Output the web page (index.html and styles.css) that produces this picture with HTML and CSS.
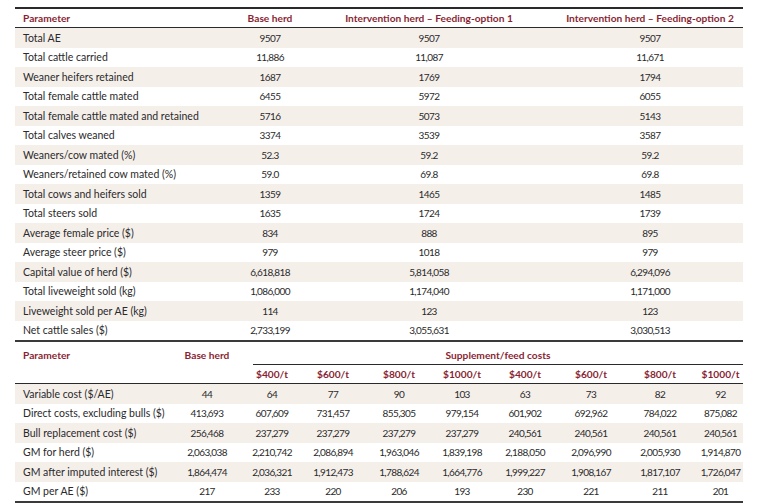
FILE: index.html
```html
<!DOCTYPE html>
<html>
<head>
<meta charset="utf-8">
<link rel="stylesheet" href="styles.css">
</head>
<body>
<div class="page">
<table class="t1">
  <colgroup><col class="c-param"><col class="c-base"><col class="c-opt1"><col class="c-opt2"></colgroup>
  <thead>
    <tr class="head"><th class="param">Parameter</th><th>Base herd</th><th>Intervention herd – Feeding-option 1</th><th class="opt2">Intervention herd – Feeding-option 2</th></tr>
  </thead>
  <tbody>
    <tr><td class="param">Total AE</td><td>9507</td><td>9507</td><td class="opt2">9507</td></tr>
    <tr><td class="param">Total cattle carried</td><td>11,886</td><td>11,087</td><td class="opt2">11,671</td></tr>
    <tr><td class="param">Weaner heifers retained</td><td>1687</td><td>1769</td><td class="opt2">1794</td></tr>
    <tr><td class="param">Total female cattle mated</td><td>6455</td><td>5972</td><td class="opt2">6055</td></tr>
    <tr><td class="param">Total female cattle mated and retained</td><td>5716</td><td>5073</td><td class="opt2">5143</td></tr>
    <tr><td class="param">Total calves weaned</td><td>3374</td><td>3539</td><td class="opt2">3587</td></tr>
    <tr><td class="param">Weaners/cow mated (%)</td><td>52.3</td><td>59.2</td><td class="opt2">59.2</td></tr>
    <tr><td class="param">Weaners/retained cow mated (%)</td><td>59.0</td><td>69.8</td><td class="opt2">69.8</td></tr>
    <tr><td class="param">Total cows and heifers sold</td><td>1359</td><td>1465</td><td class="opt2">1485</td></tr>
    <tr><td class="param">Total steers sold</td><td>1635</td><td>1724</td><td class="opt2">1739</td></tr>
    <tr><td class="param">Average female price ($)</td><td>834</td><td>888</td><td class="opt2">895</td></tr>
    <tr><td class="param">Average steer price ($)</td><td>979</td><td>1018</td><td class="opt2">979</td></tr>
    <tr><td class="param">Capital value of herd ($)</td><td>6,618,818</td><td>5,814,058</td><td class="opt2">6,294,096</td></tr>
    <tr><td class="param">Total liveweight sold (kg)</td><td>1,086,000</td><td>1,174,040</td><td class="opt2">1,171,000</td></tr>
    <tr><td class="param">Liveweight sold per AE (kg)</td><td>114</td><td>123</td><td class="opt2">123</td></tr>
    <tr class="last"><td class="param">Net cattle sales ($)</td><td>2,733,199</td><td>3,055,631</td><td class="opt2">3,030,513</td></tr>
  </tbody>
</table>
<table class="t2">
  <colgroup><col class="d-param"><col class="d-base"><col class="d1"><col class="d2"><col class="d3"><col class="d4"><col class="d5"><col class="d6"><col class="d7"><col class="d8"></colgroup>
  <thead>
    <tr class="head h1"><th class="param">Parameter</th><th>Base herd</th><th colspan="8" class="supp"><div class="supp-label">Supplement/feed costs</div></th></tr>
    <tr class="head h2"><th class="param"></th><th></th><th>$400/t</th><th>$600/t</th><th>$800/t</th><th>$1000/t</th><th>$400/t</th><th>$600/t</th><th>$800/t</th><th>$1000/t</th></tr>
  </thead>
  <tbody>
    <tr><td class="param">Variable cost ($/AE)</td><td>44</td><td>64</td><td>77</td><td>90</td><td>103</td><td>63</td><td>73</td><td>82</td><td>92</td></tr>
    <tr><td class="param">Direct costs, excluding bulls ($)</td><td>413,693</td><td>607,609</td><td>731,457</td><td>855,305</td><td>979,154</td><td>601,902</td><td>692,962</td><td>784,022</td><td>875,082</td></tr>
    <tr><td class="param">Bull replacement cost ($)</td><td>256,468</td><td>237,279</td><td>237,279</td><td>237,279</td><td>237,279</td><td>240,561</td><td>240,561</td><td>240,561</td><td>240,561</td></tr>
    <tr><td class="param">GM for herd ($)</td><td>2,063,038</td><td>2,210,742</td><td>2,086,894</td><td>1,963,046</td><td>1,839,198</td><td>2,188,050</td><td>2,096,990</td><td>2,005,930</td><td>1,914,870</td></tr>
    <tr><td class="param">GM after imputed interest ($)</td><td>1,864,474</td><td>2,036,321</td><td>1,912,473</td><td>1,788,624</td><td>1,664,776</td><td>1,999,227</td><td>1,908,167</td><td>1,817,107</td><td>1,726,047</td></tr>
    <tr class="last"><td class="param">GM per AE ($)</td><td>217</td><td>233</td><td>220</td><td>206</td><td>193</td><td>230</td><td>221</td><td>211</td><td>201</td></tr>
  </tbody>
</table>
</div>
</body>
</html>
```
FILE: styles.css
```css
html, body {
  margin: 0;
  padding: 0;
  background: #ffffff;
}
.page {
  padding: 7px 0 0 15px;
  font-family: "Lato", "Open Sans", sans-serif;
  font-size: 10.5px;
  color: #2a2a2a;
}
table {
  border-collapse: separate;
  border-spacing: 0;
  table-layout: fixed;
  width: 728px;
}
th, td {
  padding: 0;
  text-align: center;
  vertical-align: middle;
  white-space: nowrap;
}
td {
  font-size: 10px;
  letter-spacing: -0.6px;
}
td.param {
  font-size: 10.5px;
  letter-spacing: 0;
}
th {
  font-weight: 700;
  color: #8a1f33;
  font-size: 10.2px;
}
.param {
  text-align: left;
  padding-left: 8px;
}
.c-param { width: 208px; }
.c-base { width: 94px; }
.c-opt1 { width: 224px; }
.c-opt2 { width: 202px; }
.opt2 { padding-left: 16px; }

.t1 .head th {
  height: 18px;
  border-top: 2px solid #2a2a2a;
  border-bottom: 1px solid #2a2a2a;
}
tbody td {
  height: 19.5px;
}
tbody tr:nth-child(odd) td {
  background: #f5efea;
}
.t1 tr.last td {
  border-bottom: 2px solid #3a3a3a;
}

.d-param { width: 157px; }
.d-base { width: 70px; }
.d1 { width: 60px; }
.d2 { width: 62px; }
.d3 { width: 70px; }
.d4 { width: 56px; }
.d5 { width: 70px; }
.d6 { width: 62px; }
.d7 { width: 76px; }
.d8 { width: 45px; }

.t2 .h1 th {
  height: 22px;
  vertical-align: top;
  padding-top: 7px;
  box-sizing: border-box;
}
.t2 .h1 th.supp {
  padding: 7px 0 0 11px;
}
.supp-label {
  border-bottom: 1px solid #2a2a2a;
  height: 15px;
  line-height: 12px;
}
.t2 .h2 th {
  height: 18px;
  border-bottom: 1px solid #2a2a2a;
}
.t2 tr.last td {
  border-bottom: 2px solid #3a3a3a;
}
```
